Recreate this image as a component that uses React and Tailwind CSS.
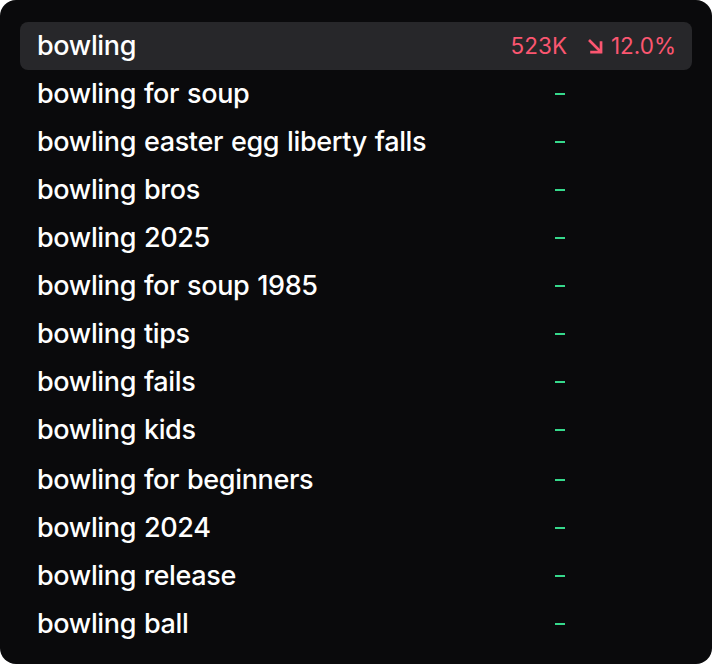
import React from "react";

const items = [
  "bowling for soup",
  "bowling easter egg liberty falls",
  "bowling bros",
  "bowling 2025",
  "bowling for soup 1985",
  "bowling tips",
  "bowling fails",
  "bowling kids",
  "bowling for beginners",
  "bowling 2024",
  "bowling release",
  "bowling ball",
];

function Arrow() {
  return (
    <svg width="19" height="19" viewBox="0 0 24 24" fill="none" stroke="currentColor" strokeWidth="3.4" strokeLinecap="square" strokeLinejoin="miter">
      <path d="M5 5l13 13" />
      <path d="M19 7v12H7" />
    </svg>
  );
}

export default function App() {
  return (
    <div className="w-[712px] h-[664px] bg-white" style={{ fontFamily: 'Inter, "Noto Sans", sans-serif' }}>
      <div className="w-full h-full bg-[#0a0a0c] rounded-[16px] px-[20px] pt-[22px]">
        <div className="flex items-center h-[48px] rounded-[8px] bg-[#27272a] pl-[17px] pr-[16px]">
          <div className="flex-1 text-white text-[27px] font-medium tracking-[-0.35px] [word-spacing:1px]">bowling</div>
          <div className="w-[100px] text-right text-[#fb5670] text-[22.5px]">523K</div>
          <div className="w-[109px] flex items-center justify-end gap-[6px] text-[#fb5670] text-[22.5px]">
            <Arrow />
            <span>12.0%</span>
          </div>
        </div>
        {items.map((t, i) => (
          <div key={t} className={`flex items-center h-[48px] pl-[17px] pr-[16px] ${i === 8 ? "mt-[2px]" : ""}`}>
            <div className="flex-1 text-white text-[27px] font-medium tracking-[-0.35px] [word-spacing:1px]">{t}</div>
            <div className="w-[100px] flex justify-end pr-[2px]">
              <div className="w-[10px] h-[2px] bg-[#36d98c]" />
            </div>
            <div className="w-[109px]" />
          </div>
        ))}
      </div>
    </div>
  );
}
